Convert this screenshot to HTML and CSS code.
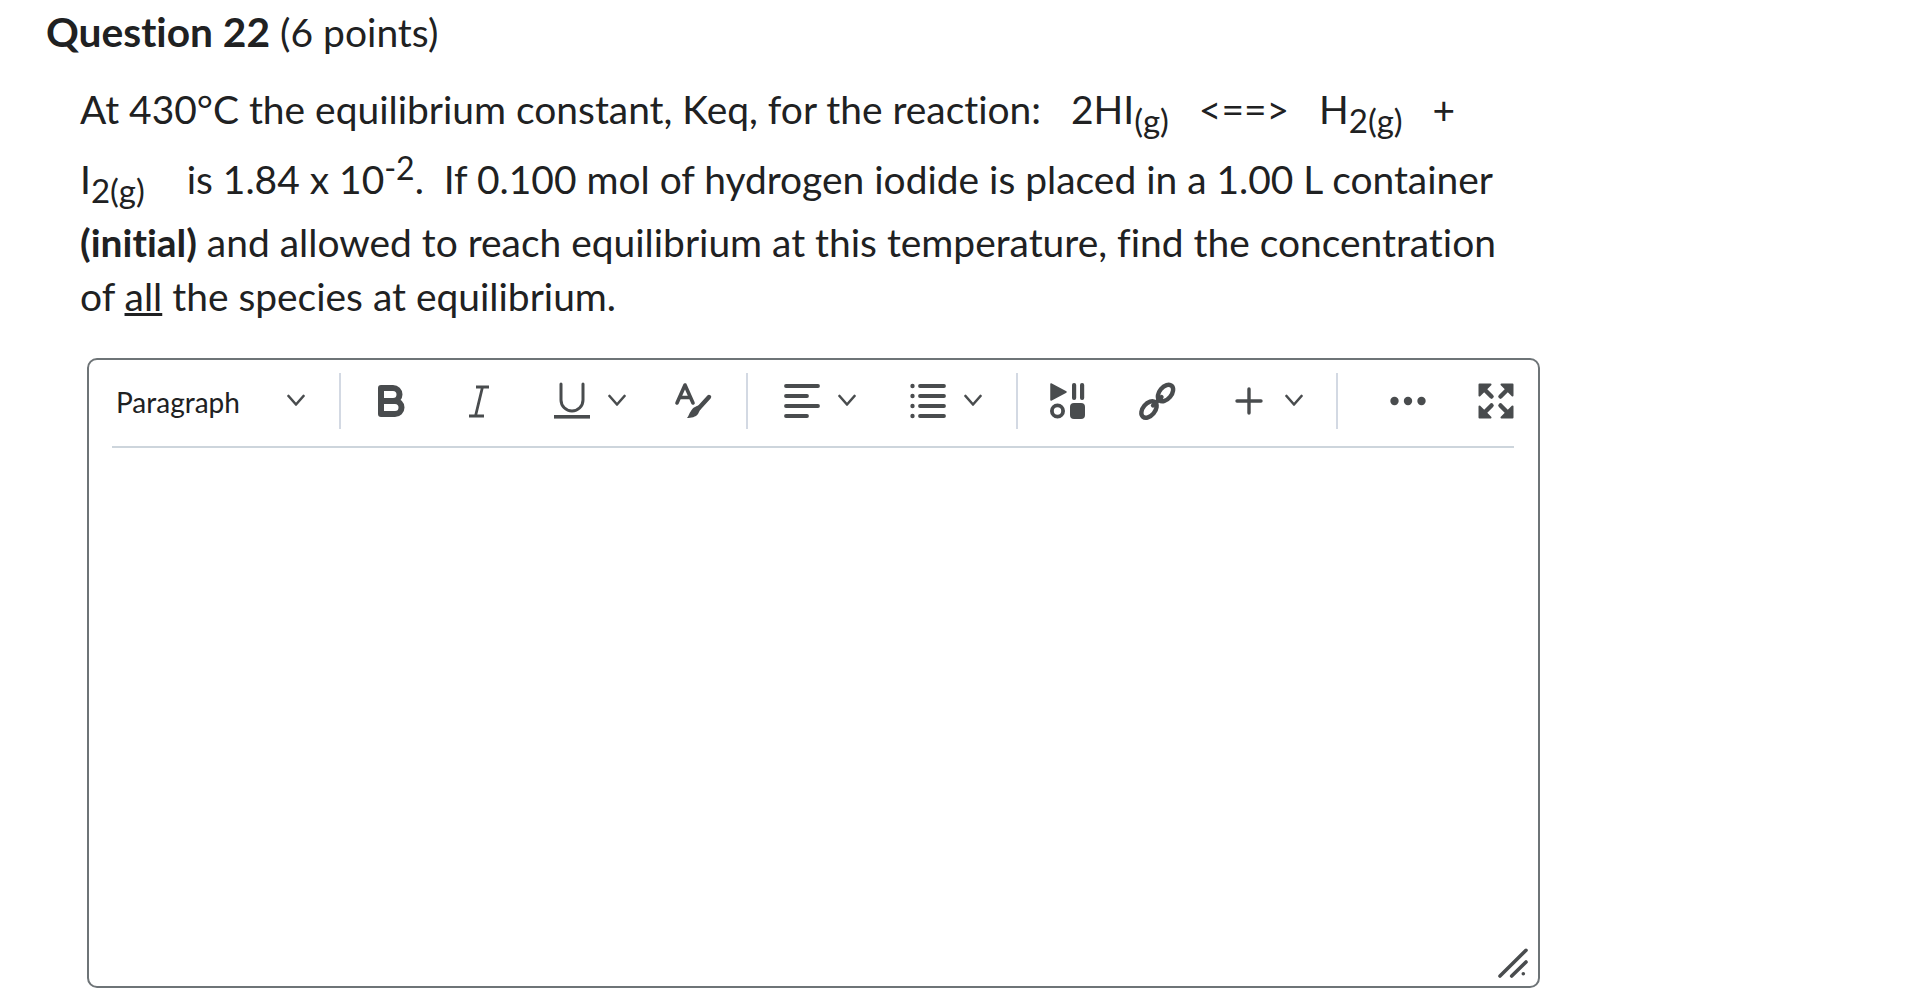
FILE: index.html
```html
<!DOCTYPE html>
<html lang="en">
<head>
  <meta charset="UTF-8">
  <title>Question 22</title>
  <link rel="stylesheet" href="styles.css">
</head>
<body>

<svg class="sprite" xmlns="http://www.w3.org/2000/svg">
  <symbol id="chev" viewBox="0 0 18 14">
    <path d="M1.500 2L9 10.500 16.500 2" fill="none" stroke="currentColor" stroke-width="2.600" stroke-linecap="round" stroke-linejoin="round"/>
  </symbol>
  <symbol id="arrow" viewBox="0 0 36 36">
    <path d="M1.500 1.500h11l-11 11z" fill="currentColor" stroke="currentColor" stroke-width="2" stroke-linejoin="round"/>
    <path d="M5 5l8.500 8.500" stroke="currentColor" stroke-width="4.500" stroke-linecap="round"/>
  </symbol>
</svg>

<h2 class="question-title"><strong>Question 22</strong> (6 points)</h2>

<div class="question-text">
  At 430°C the equilibrium constant, Keq, for the reaction:&nbsp;&nbsp; 2HI<sub>(g)</sub>&nbsp;&nbsp; &lt;==&gt;&nbsp;&nbsp; H<sub>2(g)</sub>&nbsp;&nbsp; +<br>
  I<sub class="sub-spaced">2(g)</sub>&nbsp;&nbsp;&nbsp; is 1.84 x 10<sup>-2</sup>.&nbsp; If 0.100 mol of hydrogen iodide is placed in a 1.00 L container<br>
  <strong>(initial)</strong> and allowed to reach equilibrium at this temperature, find the concentration<br>
  of <u>all</u> the species at equilibrium.
</div>

<div class="editor">
  <div class="toolbar">
    <div class="group group-format">
      <span class="format-label">Paragraph</span>
      <svg class="chevron"><use href="#chev"/></svg>
    </div>

    <div class="group group-text">
      <div class="tool">
        <svg class="icon" viewBox="0 0 36 36"><path d="M8 5h12a6.500 6.500 0 0 1 0 13H8zM8 18h14a6.500 6.500 0 0 1 0 13H8z" fill="none" stroke="currentColor" stroke-width="6" stroke-linejoin="round"/></svg>
      </div>
      <div class="tool">
        <svg class="icon" viewBox="0 0 36 36"><path d="M15 4h13M8 33h15M21.500 4l-7 29" fill="none" stroke="currentColor" stroke-width="2.800"/></svg>
      </div>
      <div class="tool-split">
        <svg class="icon" viewBox="0 0 36 36"><path d="M7 1v16a11 11 0 0 0 22 0V1" fill="none" stroke="currentColor" stroke-width="3" stroke-linecap="round"/><rect x="0" y="32" width="36" height="3.600" fill="currentColor"/></svg>
        <svg class="chevron"><use href="#chev"/></svg>
      </div>
      <div class="tool">
        <svg class="icon" viewBox="0 0 36 36">
          <path d="M2 20L10 2l8 18M5 14.500h10" fill="none" stroke="currentColor" stroke-width="3.600" stroke-linecap="round" stroke-linejoin="round"/>
          <path d="M34 14L24 25" stroke="currentColor" stroke-width="4.400" stroke-linecap="round"/>
          <path d="M27 23l-4 8c-2 3-7 4-11 4 2-2 2-5 4-7 2-4 6-5 9-6z" fill="currentColor"/>
        </svg>
      </div>
    </div>

    <div class="group group-block">
      <div class="tool-split">
        <svg class="icon" viewBox="0 0 36 36"><path d="M2 3h32M2 13h21M2 23h32M2 33h21" stroke="currentColor" stroke-width="3.800" stroke-linecap="round"/></svg>
        <svg class="chevron"><use href="#chev"/></svg>
      </div>
      <div class="tool-split">
        <svg class="icon" viewBox="0 0 36 36">
          <path d="M10 3h24M10 13h24M10 23h24M10 33h24" stroke="currentColor" stroke-width="3.800" stroke-linecap="round"/>
          <g fill="currentColor"><circle cx="2.500" cy="3" r="2.200"/><circle cx="2.500" cy="13" r="2.200"/><circle cx="2.500" cy="23" r="2.200"/><circle cx="2.500" cy="33" r="2.200"/></g>
        </svg>
        <svg class="chevron"><use href="#chev"/></svg>
      </div>
    </div>

    <div class="group group-insert">
      <div class="tool">
        <svg class="icon" viewBox="0 0 36 36">
          <path d="M2 1l15 8-15 8z" fill="currentColor" stroke="currentColor" stroke-width="1.500" stroke-linejoin="round"/>
          <rect x="23" y="0" width="4.200" height="17" rx="2" fill="currentColor"/>
          <rect x="31" y="0" width="4.200" height="17" rx="2" fill="currentColor"/>
          <circle cx="8.500" cy="28" r="5.600" fill="none" stroke="currentColor" stroke-width="3.800"/>
          <rect x="21" y="20" width="15" height="16" rx="4" fill="currentColor"/>
        </svg>
      </div>
      <div class="tool">
        <svg class="icon" viewBox="0 0 36 36" fill="none" stroke="currentColor" stroke-width="4.400">
          <ellipse cx="28.500" cy="10" rx="9.500" ry="6" transform="rotate(-50 28.500 10)"/>
          <ellipse cx="12" cy="26.500" rx="9.500" ry="6" transform="rotate(-50 12 26.500)"/>
          <path d="M16 22.500L24.500 14" stroke-linecap="round"/>
        </svg>
      </div>
      <div class="tool-split">
        <svg class="icon" viewBox="0 0 36 36"><path d="M18 6v24M6 18h24" stroke="currentColor" stroke-width="3.400" stroke-linecap="round"/></svg>
        <svg class="chevron"><use href="#chev"/></svg>
      </div>
    </div>

    <div class="group group-more">
      <div class="tool">
        <svg class="icon" viewBox="0 0 36 36" fill="currentColor"><circle cx="4.500" cy="18" r="4.200"/><circle cx="18" cy="18" r="4.200"/><circle cx="31.500" cy="18" r="4.200"/></svg>
      </div>
      <div class="tool tool-last">
        <svg class="icon" viewBox="0 0 36 36">
          <use href="#arrow"/>
          <use href="#arrow" transform="rotate(90 18 18)"/>
          <use href="#arrow" transform="rotate(180 18 18)"/>
          <use href="#arrow" transform="rotate(270 18 18)"/>
        </svg>
      </div>
    </div>
  </div>

  <div class="editor-body"></div>

  <svg class="grip" viewBox="0 0 30 30"><path d="M2 28L28 2.300M13.700 28L28 14M25.300 25.700h.01" fill="none" stroke="currentColor" stroke-width="3.600" stroke-linecap="round"/></svg>
</div>

</body>
</html>
```
FILE: styles.css
```css
/* Question page with rich text editor */
body {
  margin: 0;
  background-color: #fff;
  color: #202122;
  font-family: Lato, "Open Sans", sans-serif;
  font-variant-ligatures: none;
}
.sprite {
  position: absolute;
  width: 0;
  height: 0;
}
.question-title {
  margin: 0;
  padding: 8px 0 0 46px;
  font-size: 39px;
  line-height: 48px;
  font-weight: 400;
}
.question-title strong {
  font-size: 40.700px;
}
.question-text {
  margin: 26px 0 0 80px;
  font-size: 38.940px;
  line-height: 54px;
}
.question-text sub {
  font-size: 33px;
  line-height: 50px;
}
.question-text sup {
  font-size: 32px;
  line-height: 46px;
}
.question-text .sub-spaced {
  margin-right: 2px;
}
.editor {
  position: relative;
  box-sizing: border-box;
  width: 1453px;
  height: 630px;
  margin: 35px 0 0 87px;
  border: 2px solid #6e7477;
  border-radius: 10px;
}
.toolbar {
  display: flex;
  align-items: stretch;
  margin: 0 24px 0 23px;
  padding: 13px 0 17px;
  border-bottom: 2px solid #cdd5dc;
  color: #494c4e;
}
.group {
  display: flex;
  align-items: center;
  height: 56px;
  box-sizing: border-box;
}
.group-format {
  width: 229px;
  padding-left: 4px;
  border-right: 2px solid #d3d9e3;
  color: #494c4e;
}
.format-label {
  width: 171px;
  padding-top: 2px;
  font-size: 28px;
  color: #202122;
}
.group-text {
  width: 408px;
  padding-left: 6px;
  border-right: 2px solid #d3d9e3;
}
.group-block {
  width: 270px;
  padding-left: 5px;
  border-right: 2px solid #d3d9e3;
}
.group-insert {
  width: 320px;
  padding-left: 5px;
  border-right: 2px solid #d3d9e3;
}
.group-insert .tool-split {
  padding-left: 32px;
  width: 127px;
}
.group-more {
  padding-left: 26px;
}
.tool {
  display: flex;
  justify-content: center;
  align-items: center;
  flex-shrink: 0;
  width: 88px;
}
.tool-last {
  justify-content: flex-end;
  width: 62px;
}
.tool-split {
  display: flex;
  align-items: center;
  flex-shrink: 0;
  gap: 18px;
  width: 126px;
  box-sizing: border-box;
  padding-left: 31px;
}
.icon {
  width: 36px;
  height: 36px;
  overflow: visible;
}
.chevron {
  width: 18px;
  height: 14px;
}
.grip {
  position: absolute;
  right: 10px;
  bottom: 8px;
  width: 30px;
  height: 30px;
  color: #494c4e;
}
```
